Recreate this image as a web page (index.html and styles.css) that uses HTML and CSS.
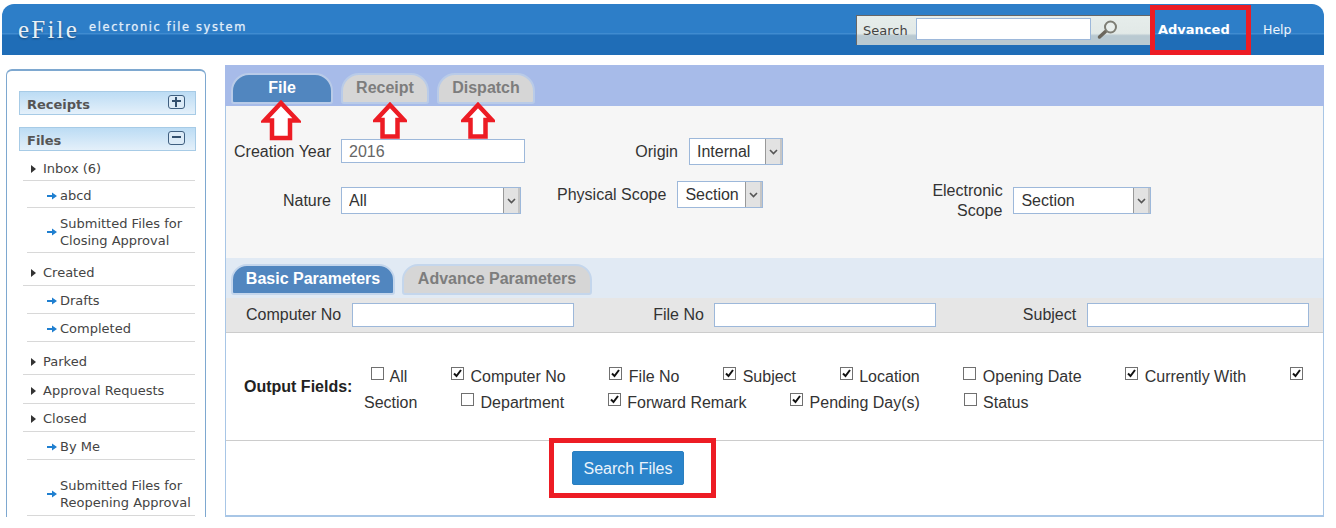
FILE: index.html
```html
<!DOCTYPE html>
<html lang="en">
<head>
<meta charset="utf-8">
<title>eFile</title>
<link rel="stylesheet" href="styles.css">
</head>
<body>
<div class="page">
  <header class="topbar">
    <div class="brand"><span class="logo">eFile</span><span class="tagline">electronic file system</span></div>
    <div class="searchbox">
      <span class="search-label">Search</span>
      <input class="search-input" type="text">
      <svg class="lens" width="22" height="20" viewBox="0 0 22 20"><path d="M2.500 17 8.500 11.500" stroke="#6b665c" stroke-width="3.500" stroke-linecap="round"/><circle cx="13.500" cy="7" r="5.500" fill="#e9efed" stroke="#7d7d74" stroke-width="2"/></svg>
    </div>
    <a class="nav-link strong">Advanced</a>
    <a class="nav-link help">Help</a>
  </header>

  <div class="content">
    <aside class="sidebar">
      <div class="acc-head"><span>Receipts</span><i class="acc-btn plus"></i></div>
      <div class="acc-head files"><span>Files</span><i class="acc-btn"></i></div>
      <ul class="tree">
        <li class="top first"><b class="tri"></b>Inbox (6)</li>
        <li class="sub tight"><svg class="arw" width="10" height="8" viewBox="0 0 10 8"><path d="M0 3h5V0.500L10 4 5 7.500V5H0z" fill="#1f7fd0"/></svg>abcd</li>
        <li class="sub two-line"><svg class="arw" width="10" height="8" viewBox="0 0 10 8"><path d="M0 3h5V0.500L10 4 5 7.500V5H0z" fill="#1f7fd0"/></svg><span>Submitted Files for<br>Closing Approval</span></li>
        <li class="top gap"><b class="tri"></b>Created</li>
        <li class="sub"><svg class="arw" width="10" height="8" viewBox="0 0 10 8"><path d="M0 3h5V0.500L10 4 5 7.500V5H0z" fill="#1f7fd0"/></svg>Drafts</li>
        <li class="sub"><svg class="arw" width="10" height="8" viewBox="0 0 10 8"><path d="M0 3h5V0.500L10 4 5 7.500V5H0z" fill="#1f7fd0"/></svg>Completed</li>
        <li class="top gap"><b class="tri"></b>Parked</li>
        <li class="top roomy"><b class="tri"></b>Approval Requests</li>
        <li class="top"><b class="tri"></b>Closed</li>
        <li class="sub"><svg class="arw" width="10" height="8" viewBox="0 0 10 8"><path d="M0 3h5V0.500L10 4 5 7.500V5H0z" fill="#1f7fd0"/></svg>By Me</li>
        <li class="sub gap-lg"><svg class="arw" width="10" height="8" viewBox="0 0 10 8"><path d="M0 3h5V0.500L10 4 5 7.500V5H0z" fill="#1f7fd0"/></svg><span>Submitted Files for<br>Reopening Approval</span></li>
      </ul>
    </aside>

    <main class="panel">
      <nav class="tabs">
        <a class="tab active file">File</a>
        <a class="tab receipt">Receipt</a>
        <a class="tab dispatch">Dispatch</a>
      </nav>
      <section class="filters">
        <div class="frow one">
          <label class="lab w-first">Creation Year</label>
          <input class="field year" type="text" value="2016">
          <label class="lab w-origin">Origin</label>
          <select class="sel s-origin"><option>Internal</option></select>
        </div>
        <div class="frow two">
          <label class="lab w-first low">Nature</label>
          <select class="sel s-nature low"><option>All</option></select>
          <label class="lab w-phys">Physical Scope</label>
          <select class="sel s-phys"><option>Section</option></select>
          <label class="lab w-elec">Electronic Scope</label>
          <select class="sel s-elec low"><option>Section</option></select>
        </div>
      </section>
      <nav class="subtabs">
        <a class="subtab active basic">Basic Parameters</a>
        <a class="subtab advance">Advance Parameters</a>
      </nav>
      <section class="params">
        <label class="plab p1">Computer No</label><input class="field pin" type="text">
        <label class="plab p2">File No</label><input class="field pin" type="text">
        <label class="plab p3">Subject</label><input class="field pin" type="text">
      </section>
      <section class="output">
        <strong class="out-title">Output Fields:</strong>
        <div class="out-list">
          <input class="cb" type="checkbox"> <span class="opt">All</span>
          <input class="cb" type="checkbox" checked> <span class="opt">Computer No</span>
          <input class="cb" type="checkbox" checked> <span class="opt">File No</span>
          <input class="cb" type="checkbox" checked> <span class="opt">Subject</span>
          <input class="cb" type="checkbox" checked> <span class="opt">Location</span>
          <input class="cb" type="checkbox"> <span class="opt">Opening Date</span>
          <input class="cb" type="checkbox" checked> <span class="opt">Currently With</span>
          <input class="cb" type="checkbox" checked> <span class="opt">Section</span>
          <input class="cb" type="checkbox"> <span class="opt">Department</span>
          <input class="cb" type="checkbox" checked> <span class="opt">Forward Remark</span>
          <input class="cb" type="checkbox" checked> <span class="opt">Pending Day(s)</span>
          <input class="cb" type="checkbox"> <span class="opt">Status</span>
        </div>
      </section>
      <div class="actions"><button class="go" type="button">Search Files</button></div>
    </main>
  </div>

  <div class="mark box-adv"></div>
  <div class="mark box-go"></div>
  <svg class="up up-a" width="40" height="42" viewBox="0 0 40 42"><path d="M20 3 36.500 20.500H29V38H11V20.500H3.500Z" fill="#fff" stroke="#ed1c24" stroke-width="4.500"/></svg>
  <svg class="up up-b" width="34" height="38" viewBox="0 0 34 38"><path d="M17 3 31 18H24.500V34.500H9.500V18H3Z" fill="#fff" stroke="#ed1c24" stroke-width="4.500"/></svg>
  <svg class="up up-c" width="34" height="38" viewBox="0 0 34 38"><path d="M17 3 31 18H24.500V34.500H9.500V18H3Z" fill="#fff" stroke="#ed1c24" stroke-width="4.500"/></svg>
</div>
</body>
</html>
```
FILE: styles.css
```css
* { box-sizing: border-box; }
html, body { margin: 0; padding: 0; background: #fff; }
body { font-family: "Liberation Sans", Arial, sans-serif; font-size: 16px; color: #333; }
.page { position: relative; width: 1336px; height: 528px; overflow: hidden; padding: 4px 12px 0 2px; }

.topbar {
  height: 51px; display: flex; align-items: flex-start;
  border-radius: 12px 12px 0 0;
  background: linear-gradient(#2d7ec8 0, #2d7ec8 29px, #3f8bd0 29px, #3f8bd0 30px, #1f6db7 31px, #1f6db7 100%);
}
.brand { display: flex; width: 854px; padding: 12px 0 0 16px; }
.logo { font-family: "Liberation Serif", serif; font-size: 25px; line-height: 28px; letter-spacing: 2.2px; color: #e8f0f7; width: 71px; text-shadow: 0 1px 2px rgba(0,0,0,.35); }
.tagline { font-family: "DejaVu Sans", sans-serif; font-size: 11.5px; line-height: 22px; letter-spacing: 1.6px; color: #e2eef9; text-shadow: 0 0 1px rgba(255,255,255,.6); }
.searchbox {
  width: 296px; height: 30px; margin-top: 11px; display: flex; align-items: flex-start;
  border-top: 1px solid #666; border-left: 1px solid #666;
  background: linear-gradient(#e6edeb 0, #e2e9e7 60%, #b9c9d1 68%, #b9c9d1 100%);
}
.search-label { font-family: "DejaVu Sans", sans-serif; font-size: 13px; line-height: 30px; color: #444; width: 59px; padding-left: 6px; }
.search-input { width: 175px; height: 22px; margin-top: 2px; border: 1px solid #9db8da; background: #fff; }
.lens { margin: 4px 0 0 6px; }
.nav-link { font-family: "DejaVu Sans", sans-serif; font-size: 13px; line-height: 52px; color: #eef5fb; }
.strong { font-weight: bold; color: #fff; margin-left: 6px; width: 105px; }
.help { font-size: 12.5px; }

.content { display: flex; align-items: flex-start; margin-top: 10px; padding-left: 4px; }

.sidebar {
  width: 200px; height: 448px; margin-top: 4px; padding: 20px 9px 0 12px; overflow: hidden;
  border: solid #7ea8d0; border-width: 2px 1px 0 1px; border-radius: 6px 6px 0 0;
  font-family: "DejaVu Sans", sans-serif; font-size: 13px; color: #444;
}
.acc-head {
  height: 24px; width: 177px; display: flex; align-items: center; justify-content: space-between;
  padding: 2px 10px 0 7px; border: 1px solid #a7cbe6;
  background: linear-gradient(#bcdcf4, #e4f0fa);
  font-weight: bold; font-size: 13px; color: #555;
}
.acc-head.files { margin-top: 12px; }
.acc-btn {
  position: relative; display: block; width: 17px; height: 14px; margin-top: -4px;
  border: 1.5px solid #3f5f80; border-radius: 3px; background: #dcebf7;
}
.acc-btn::before { content: ""; position: absolute; left: 3px; right: 3px; top: 4px; height: 2px; background: #33506e; }
.acc-btn.plus::after { content: ""; position: absolute; top: 1px; bottom: 1px; left: 6px; width: 2px; background: #33506e; }

.tree { list-style: none; margin: 0; padding: 0; line-height: 17px; }
.tree li { display: flex; align-items: center; border-bottom: 1px solid #d8d8d8; padding: 6px 0 4px; }
.tree .top { margin-left: 4px; width: 172px; padding-left: 8px; }
.tree .top.first { padding-top: 9px; padding-bottom: 3px; }
.tree .top.gap { padding-top: 11px; }
.tree .top.roomy { padding-top: 7px; }
.tree .sub { margin-left: 8px; width: 168px; padding-left: 20px; }
.tree .sub.tight { padding-top: 6px; padding-bottom: 3px; }
.tree .sub.two-line { padding-top: 7px; padding-bottom: 3px; }
.tree .sub.gap-lg { padding-top: 17px; padding-bottom: 4px; }
.tri { width: 0; height: 0; margin-right: 7px; border: 4.500px solid transparent; border-left: 5px solid #333; border-right: 0; }
.arw { margin-right: 3px; flex: none; }

.panel {
  width: 1099px; margin-left: 19px; height: 452px;
  border: solid #a8c6e6; border-width: 0 1px 2px 1px; background: #fff;
}
.tabs { height: 41px; padding: 8px 0 0 6px; display: flex; background: #a7bbe9; margin: 0 -1px; }
.tab {
  height: 31px; text-align: center; font-weight: bold; line-height: 26px; color: #7d7d7d;
  background: #d6d6d6; border: 2px solid #b9cbe8; border-radius: 18px 18px 3px 3px;
}
.tab.active { background: #5186bf; color: #fff; }
.file { width: 102px; }
.receipt { width: 88px; margin-left: 8px; }
.dispatch { width: 98px; margin-left: 8px; }

.filters { height: 152px; padding-top: 32px; background: #f6f6f6; }
.frow { display: flex; align-items: flex-start; }
.frow.one { height: 27px; }
.frow.two { margin-top: 16px; }
.lab { text-align: right; line-height: 18px; padding-top: 4px; margin-right: 11px; flex: none; }
.one .lab { padding-top: 5px; }
.w-first { width: 105px; margin-right: 10px; }
.w-origin { width: 153px; }
.w-phys { margin-left: 36px; padding-top: 5px; }
.w-elec { width: 70px; margin-left: 169px; padding-top: 0; line-height: 20px; }
.low { margin-top: 6px; }
.lab.low { padding-top: 5px; }

.field { height: 24px; border: 1px solid #9db8da; background: #fff; font: 16px "Liberation Sans", Arial, sans-serif; color: #666; padding: 1px 7px 0; }
.year { width: 184px; margin-top: 1px; }
.sel {
  appearance: none; -webkit-appearance: none; height: 27px; padding: 0 7px; border: 1px solid #9db8da; border-radius: 0;
  font: 16px "Liberation Sans", Arial, sans-serif; color: #333;
  background: #fff url("data:image/svg+xml,%3Csvg xmlns='http://www.w3.org/2000/svg' width='17' height='27'%3E%3Crect width='17' height='27' fill='%23e2e2e2'/%3E%3Cpath d='M0.500 0V27' stroke='%23999'/%3E%3Cpath d='M16 0V27M0 26.500H17' stroke='%23a9a9a9'/%3E%3Cpath d='M5 12l3.500 3.500L12 12' fill='none' stroke='%23555' stroke-width='1.600'/%3E%3C/svg%3E") no-repeat right center;
}
.s-origin { width: 94px; }
.s-nature { width: 180px; }
.s-phys { width: 86px; }
.s-elec { width: 138px; }

.subtabs { height: 40px; padding: 6px 0 0 5px; display: flex; background: #e1eaf4; }
.subtab {
  height: 31px; text-align: center; font-weight: bold; line-height: 25px; color: #7d7d7d;
  background: #d6d6d6; border: 2px solid #c4d6ec; border-radius: 16px 16px 3px 3px;
}
.subtab.active { background: #5186bf; color: #fff; }
.basic { width: 164px; }
.advance { width: 190px; margin-left: 7px; }

.params { height: 35px; display: flex; align-items: flex-start; padding-top: 5px; background: #e6e6e6; border-bottom: 1px solid #ccc; }
.plab { line-height: 24px; margin-right: 10px; }
.p1 { margin-left: 20px; margin-right: 11px; }
.p2 { margin-left: 79px; }
.p3 { margin-left: 87px; margin-right: 11px; }
.pin { width: 222px; }

.output { height: 108px; display: flex; border-bottom: 1px solid #ccc; padding-top: 30px; }
.out-title { width: 120px; margin-left: 18px; padding-top: 15px; line-height: 18px; color: #222; }
.out-list { width: 956px; padding-top: 1px; line-height: 26px; text-indent: 7px; }
.opt { white-space: nowrap; margin-right: 39.25px; }
.cb {
  appearance: none; -webkit-appearance: none; width: 13px; height: 13px; margin: 0 2px 8px 0; vertical-align: middle;
  border: 1px solid #707070; background: #fff; border-radius: 0;
}
.cb:checked {
  background: #fff url("data:image/svg+xml,%3Csvg xmlns='http://www.w3.org/2000/svg' width='11' height='11'%3E%3Cpath d='M2 5.500l2.500 2.500L9 2' fill='none' stroke='%23111' stroke-width='2'/%3E%3C/svg%3E") no-repeat center;
}

.actions { padding: 10px 0 0 346px; }
.go { width: 112px; height: 34px; border: 1px solid #2a7fc0; border-radius: 2px; background: #2a84cb; color: #eaf3fb; font: 16px "Liberation Sans", Arial, sans-serif; padding: 1px 0 0; }

.mark { position: absolute; border: 5px solid #ed1c24; }
.box-adv { left: 1150px; top: 5px; width: 101px; height: 50px; }
.box-go { left: 549px; top: 438px; width: 167px; height: 60px; }
.up { position: absolute; }
.up-a { left: 261px; top: 100px; }
.up-b { left: 373px; top: 102px; }
.up-c { left: 461px; top: 102px; }
```
